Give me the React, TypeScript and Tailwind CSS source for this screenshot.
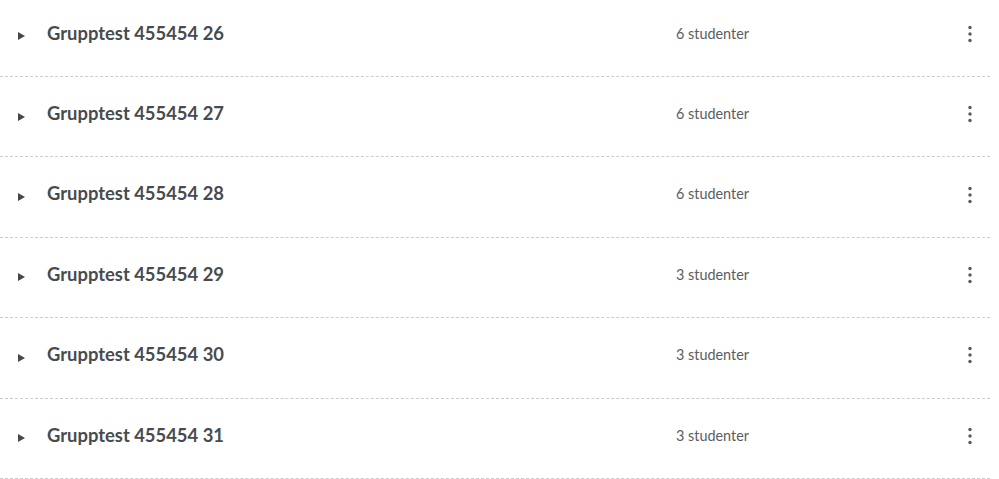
import React from 'react'

const groups = [
  { name: 'Grupptest 455454 26', count: 6 },
  { name: 'Grupptest 455454 27', count: 6 },
  { name: 'Grupptest 455454 28', count: 6 },
  { name: 'Grupptest 455454 29', count: 3 },
  { name: 'Grupptest 455454 30', count: 3 },
  { name: 'Grupptest 455454 31', count: 3 },
]

function Caret() {
  return (
    <svg width="9" height="10" viewBox="0 0 9 10" aria-hidden>
      <path d="M1 1 L8 5 L1 9 Z" fill="#45494d" />
    </svg>
  )
}

function Kebab() {
  return (
    <svg width="6" height="18" viewBox="0 0 6 18" aria-hidden>
      <circle cx="3" cy="2.5" r="1.7" fill="#555a5e" />
      <circle cx="3" cy="9" r="1.7" fill="#555a5e" />
      <circle cx="3" cy="15.5" r="1.7" fill="#555a5e" />
    </svg>
  )
}

export default function App() {
  return (
    <div
      className="w-[999px] h-[479px] overflow-hidden bg-white"
      style={{ fontFamily: 'Lato, "Open Sans", sans-serif' }}
    >
      <ul className="w-[990px] -mt-[3.4px]">
        {groups.map(g => (
          <li
            key={g.name}
            className="h-[80.4px] box-border border-b border-dashed border-[#c7cdd1] grid grid-cols-[47px_629px_1fr_auto] items-center pb-[5px]"
          >
            <span className="flex justify-start pl-[17px] pt-[5px]">
              <Caret />
            </span>
            <span className="text-[18.4px] font-bold text-[#474b4f] leading-none pb-[2px]">{g.name}</span>
            <span className="text-[14.4px] text-[#5a5e62] leading-none">{g.count} studenter</span>
            <span className="pr-[17px] flex items-center">
              <Kebab />
            </span>
          </li>
        ))}
      </ul>
    </div>
  )
}
